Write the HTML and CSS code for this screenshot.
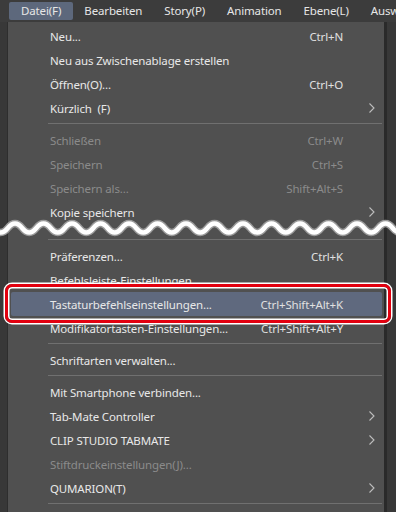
FILE: index.html
```html
<!DOCTYPE html>
<html>

<head>
	<title>Datei Menü</title>
	<link rel="stylesheet" href="styles.css">
</head>

<body>
	<div class="menubar">
		<span class="top active">Datei(F)</span>
		<span class="top">Bearbeiten</span>
		<span class="top">Story(P)</span>
		<span class="top">Animation</span>
		<span class="top">Ebene(L)</span>
		<span class="top">Ausw</span>
	</div>

	<div class="stage">
		<div class="side"></div>
		<div class="menu">
			<div class="item"><span class="label">Neu...</span><span class="key">Ctrl+N</span><span class="sub"></span></div>
			<div class="item"><span class="label">Neu aus Zwischenablage erstellen</span><span class="key"></span><span class="sub"></span></div>
			<div class="item"><span class="label">Öffnen(O)...</span><span class="key">Ctrl+O</span><span class="sub"></span></div>
			<div class="item"><span class="label">Kürzlich&nbsp; (F)</span><span class="key"></span><span class="sub"><svg class="chev" viewBox="0 0 6 10"><path d="M0.5 0.5 L5 5 L0.5 9.5"/></svg></span></div>
			<div class="sep"></div>
			<div class="item disabled"><span class="label">Schließen</span><span class="key">Ctrl+W</span><span class="sub"></span></div>
			<div class="item disabled"><span class="label">Speichern</span><span class="key">Ctrl+S</span><span class="sub"></span></div>
			<div class="item disabled"><span class="label">Speichern als...</span><span class="key">Shift+Alt+S</span><span class="sub"></span></div>
			<div class="item"><span class="label">Kopie speichern</span><span class="key"></span><span class="sub"><svg class="chev" viewBox="0 0 6 10"><path d="M0.5 0.5 L5 5 L0.5 9.5"/></svg></span></div>
			<div class="gap"></div>
			<div class="sep"></div>
			<div class="item"><span class="label">Präferenzen...</span><span class="key">Ctrl+K</span><span class="sub"></span></div>
			<div class="item"><span class="label">Befehlsleiste-Einstellungen...</span><span class="key"></span><span class="sub"></span></div>
			<div class="item hover"><span class="label">Tastaturbefehlseinstellungen...</span><span class="key">Ctrl+Shift+Alt+K</span><span class="sub"></span></div>
			<div class="item"><span class="label">Modifikatortasten-Einstellungen...</span><span class="key">Ctrl+Shift+Alt+Y</span><span class="sub"></span></div>
			<div class="sep"></div>
			<div class="item"><span class="label">Schriftarten verwalten...</span><span class="key"></span><span class="sub"></span></div>
			<div class="sep"></div>
			<div class="item"><span class="label">Mit Smartphone verbinden...</span><span class="key"></span><span class="sub"></span></div>
			<div class="item"><span class="label">Tab-Mate Controller</span><span class="key"></span><span class="sub"><svg class="chev" viewBox="0 0 6 10"><path d="M0.5 0.5 L5 5 L0.5 9.5"/></svg></span></div>
			<div class="item"><span class="label">CLIP STUDIO TABMATE</span><span class="key"></span><span class="sub"><svg class="chev" viewBox="0 0 6 10"><path d="M0.5 0.5 L5 5 L0.5 9.5"/></svg></span></div>
			<div class="item disabled"><span class="label">Stiftdruckeinstellungen(J)...</span><span class="key"></span><span class="sub"></span></div>
			<div class="item"><span class="label">QUMARION(T)</span><span class="key"></span><span class="sub"><svg class="chev" viewBox="0 0 6 10"><path d="M0.5 0.5 L5 5 L0.5 9.5"/></svg></span></div>
			<div class="sep"></div>
			<div class="item"><span class="label">&nbsp;</span><span class="key"></span><span class="sub"></span></div>
		</div>
		<div class="side right"></div>
	</div>

	<!-- break marker: items between "Kopie speichern" and "Präferenzen" left out -->
	<svg class="wave" viewBox="0 0 396 28" width="396" height="28">
		<path class="wave-edge" d="M-6.375 14 q7.125 9 14.25 0 t14.25 0 t14.25 0 t14.25 0 t14.25 0 t14.25 0 t14.25 0 t14.25 0 t14.25 0 t14.25 0 t14.25 0 t14.25 0 t14.25 0 t14.25 0 t14.25 0 t14.25 0 t14.25 0 t14.25 0 t14.25 0 t14.25 0 t14.25 0 t14.25 0 t14.25 0 t14.25 0 t14.25 0 t14.25 0 t14.25 0 t14.25 0 t14.25 0 t14.25 0"/>
		<path class="wave-core" d="M-6.375 14 q7.125 9 14.25 0 t14.25 0 t14.25 0 t14.25 0 t14.25 0 t14.25 0 t14.25 0 t14.25 0 t14.25 0 t14.25 0 t14.25 0 t14.25 0 t14.25 0 t14.25 0 t14.25 0 t14.25 0 t14.25 0 t14.25 0 t14.25 0 t14.25 0 t14.25 0 t14.25 0 t14.25 0 t14.25 0 t14.25 0 t14.25 0 t14.25 0 t14.25 0 t14.25 0 t14.25 0"/>
	</svg>

	<div class="callout"></div>
</body>

</html>
```

FILE: styles.css
```css
body {
	font-family: "Noto Sans", "Open Sans", sans-serif;
	font-size: 11.5px;
	letter-spacing: -0.15px;
	background-color: #383838;
	color: #e8e8e8;
	margin: 0;
	padding: 0;
	overflow: hidden;
}

.menubar {
	display: flex;
	height: 22px;
	align-items: center;
	padding-left: 9px;
	background-color: #3c3c3c;
	white-space: nowrap;
	overflow: hidden;
}

.top {
	padding: 0 11px;
	line-height: 18px;
	color: #e6e6e6;
	border-radius: 2px;
}

.top.active {
	padding: 0 12px;
	background-color: #5d687c;
}

.stage {
	display: flex;
}

.side {
	width: 7px;
	background-color: #383838;
}

.side.right {
	flex: 1;
}

.menu {
	width: 380px;
	padding: 2px 2px 0 3px;
	background-color: #505050;
	border-left: 1px solid #2e2e2e;
	border-right: 3px solid #2a2a2a;
	box-sizing: border-box;
}

.item {
	display: flex;
	align-items: center;
	height: 24px;
	padding-left: 39px;
	border-radius: 2px;
	white-space: nowrap;
}

.item .label {
	flex: 1;
}

.item .key {
	color: #e0e0e0;
}

.item .sub {
	width: 39px;
	display: flex;
	justify-content: flex-end;
	padding-right: 7px;
	box-sizing: border-box;
}

.chev {
	width: 6px;
	height: 10px;
	fill: none;
	stroke: #bdbdbd;
	stroke-width: 1.1;
}

.item.disabled .label,
.item.disabled .key {
	color: #8b8b8b;
}

.item.hover {
	background-color: #5f697e;
}

.sep {
	height: 8px;
	box-sizing: border-box;
	padding-top: 3px;
	margin-left: 37px;
}

.sep::after {
	content: "";
	display: block;
	height: 1px;
	background-color: #707070;
}

.gap {
	height: 12px;
}

.wave {
	position: absolute;
	left: 0;
	top: 214px;
	display: block;
}

.wave-edge {
	fill: none;
	stroke: #9a9a9a;
	stroke-width: 7.5;
}

.wave-core {
	fill: none;
	stroke: #ffffff;
	stroke-width: 4.5;
}

.callout {
	position: absolute;
	left: 5px;
	top: 284px;
	width: 386px;
	height: 39px;
	box-sizing: border-box;
	border: 3px solid #e2000f;
	border-radius: 7px;
	box-shadow: 0 0 0 1.5px #fff, inset 0 0 0 1.5px #fff;
}
```
